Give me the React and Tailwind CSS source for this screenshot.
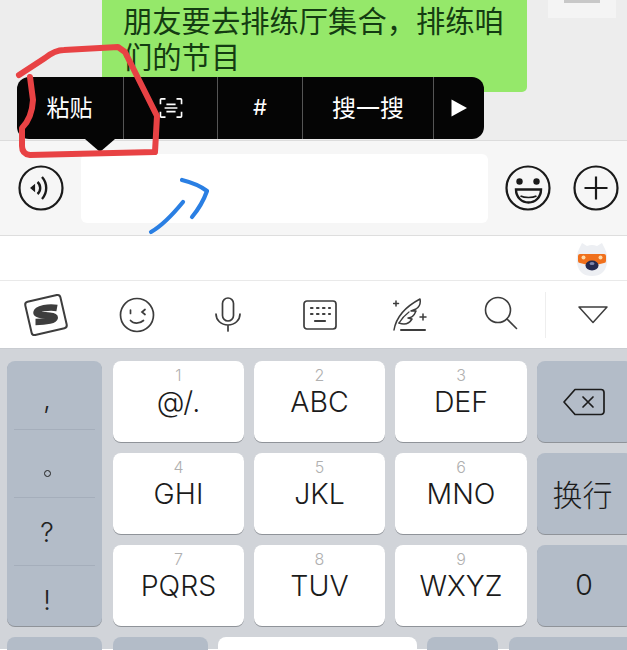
const cjk = { fontFamily: '"Noto Sans CJK SC", sans-serif' };

const keys = [
  ['1', '@/.'], ['2', 'ABC'], ['3', 'DEF'],
  ['4', 'GHI'], ['5', 'JKL'], ['6', 'MNO'],
  ['7', 'PQRS'], ['8', 'TUV'], ['9', 'WXYZ'],
];

function LetterKey({ num, label }) {
  return (
    <div className="flex flex-col items-center bg-white rounded-[8px] shadow-[0_1px_0_#8f9399] h-[81px] pt-[4px]">
      <span className="font-['Inter'] text-[16px] leading-[20px] font-light text-[#b0b0b0]">{num}</span>
      <span className="font-['Inter'] text-[28.500px] leading-[34px] font-light text-[#1b1b1b]">{label}</span>
    </div>
  );
}

function SymbolCell({ children, className = '' }) {
  return <div className={`flex items-center justify-center pr-[15px] text-[#222] ${className}`}>{children}</div>;
}

function ToolIcon({ children, className = '' }) {
  return <div className={`flex items-center justify-center ${className}`}>{children}</div>;
}

function PasteMenu() {
  return (
    <div className="absolute left-[17px] top-[77px] w-[467px] h-[62px] bg-[#050505] rounded-[12px] flex text-white">
      <div className="w-[107px] flex items-center justify-center border-r border-[#555] text-[23px] pb-[3px] pr-[1px]" style={cjk}>粘贴</div>
      <div className="w-[94px] flex items-center justify-center border-r border-[#555]">
        <svg width="24" height="22" viewBox="0 0 26 24" fill="none" stroke="#fff" strokeWidth="1.800">
          <path d="M7 2H2.500A1 1 0 0 0 1.500 3v5M19 2h4.500a1 1 0 0 1 1 1v5M7 22H2.500a1 1 0 0 1-1-1v-5M19 22h4.500a1 1 0 0 0 1-1v-5" />
          <path d="M8 8h10M6 12h14M8 16h10" />
        </svg>
      </div>
      <div className="w-[85px] flex items-center justify-center border-r border-[#555] font-['Inter'] text-[22px] pb-[2px]">#</div>
      <div className="w-[131px] flex items-center justify-center border-r border-[#555] text-[24px] pb-[3px]" style={cjk}>搜一搜</div>
      <div className="flex-1 flex items-center justify-center">
        <svg width="16" height="18" viewBox="0 0 16 18"><path d="M0.500 0.500 16 9 0.500 17.500Z" fill="#fff" /></svg>
      </div>
      <div className="absolute left-[68px] top-[62px] w-0 h-0 border-x-[15px] border-x-transparent border-t-[13px] border-t-[#050505]" />
    </div>
  );
}

export default function App() {
  return (
    <div className="relative w-[627px] h-[650px] overflow-hidden bg-white">
      {/* chat */}
      <div className="relative h-[141px] bg-[#ededed] border-b border-[#dcdcdc]">
        <div className="flex items-start">
          <div className="ml-[102px] w-[425px] h-[92px] bg-[#95e86a] rounded-b-[5px] pl-[21px] pr-[20px] pt-[3px]" style={cjk}>
            <p className="text-[29.300px] leading-[36px] -mt-[2px] text-[#143c12]">朋友要去排练厅集合，排练咱们的节目</p>
          </div>
          <div className="ml-[21px] w-[68px] h-[18px] bg-[#f4f4f4] flex justify-center">
            <div className="w-[36px] h-[3px] bg-[#c8c8c8]" />
          </div>
        </div>
      </div>
      <PasteMenu />

      {/* input bar */}
      <div className="h-[95px] bg-[#f6f6f6] border-b border-[#dedede] flex items-start pt-[13px]">
        <ToolIcon className="w-[81px] h-[68px]">
          <svg width="46" height="46" viewBox="0 0 46 46" fill="none" stroke="#1a1a1a" strokeWidth="2.200">
            <circle cx="23" cy="23" r="21.500" />
            <path d="M19.500 17a8 8 0 0 1 0 12" strokeWidth="2.400" />
            <path d="M24 12a16.500 16.500 0 0 1 0 22" strokeWidth="2.400" />
            <path d="M13 23l3.500-3v6Z" fill="#1a1a1a" strokeWidth="1.200" />
          </svg>
        </ToolIcon>
        <div className="w-[407px] h-[69px] bg-white rounded-[6px]" />
        <ToolIcon className="ml-[17px] w-[46px] h-[68px]">
          <svg width="46" height="46" viewBox="0 0 46 46" fill="none" stroke="#1a1a1a" strokeWidth="2.200">
            <circle cx="23" cy="23" r="21.500" />
            <circle cx="14.500" cy="16.500" r="3.200" fill="#1a1a1a" stroke="none" />
            <circle cx="31.500" cy="16.500" r="3.200" fill="#1a1a1a" stroke="none" />
            <path d="M11 24.500h25c0 8-6 13-12.500 13S11 32.500 11 24.500Z" strokeWidth="2.400" />
            <path d="M15.500 31c4 2 12 2 16 0" strokeWidth="1.600" />
          </svg>
        </ToolIcon>
        <ToolIcon className="ml-[22px] w-[46px] h-[68px]">
          <svg width="46" height="46" viewBox="0 0 46 46" fill="none" stroke="#1a1a1a" strokeWidth="2.200">
            <circle cx="23" cy="23" r="21.500" />
            <path d="M11.500 23h23M23 11.500v23" />
          </svg>
        </ToolIcon>
      </div>

      {/* candidate strip */}
      <div className="h-[45px] bg-white border-b border-[#e9e9e9] flex justify-end items-center pr-[19px]">
        <svg width="32" height="38" viewBox="0 0 32 38">
          <path d="M3 10 6 4 11 7Q16 5 21 7L26 4 29 10Q32 16 31 24 29 37 16 37 3 37 1 24 0 16 3 10Z" fill="#edeff3" />
          <path d="M4 15H28Q30 15 30 17V22Q30 24 28 24Q22 26 16 26 10 26 4 24Q2 24 2 22V17Q2 15 4 15Z" fill="#f0701c" />
          <circle cx="7.500" cy="18.500" r="2" fill="#ffd9a8" />
          <circle cx="24.500" cy="18.500" r="2" fill="#ffd9a8" />
          <ellipse cx="16" cy="26.500" rx="6.500" ry="5" fill="#252a4f" />
          <ellipse cx="16" cy="24.500" rx="2.500" ry="1.500" fill="#7d86ad" />
        </svg>
      </div>

      {/* toolbar */}
      <div className="h-[67px] bg-white flex items-center">
        <ToolIcon className="w-[92px]">
          <svg width="46" height="46" viewBox="0 0 46 46" fill="none">
            <rect x="5" y="6" width="36" height="34" rx="3" transform="rotate(-13 23 23)" stroke="#3d3d3d" strokeWidth="2" />
            <path d="M34 16C26 14.500 14 16.500 13.500 20.500c-.5 4 16 1.500 18 4.500 1.500 3-8 5-19 5" stroke="#3d3d3d" strokeWidth="6.500" />
          </svg>
        </ToolIcon>
        <ToolIcon className="w-[90px]">
          <svg width="36" height="36" viewBox="0 0 36 36" fill="none" stroke="#3d3d3d" strokeWidth="1.700" strokeLinecap="round">
            <circle cx="18" cy="18" r="16.500" />
            <path d="M11.500 13v3.500M26 12.500l-3 2.500 3 2.500M11.500 23.500c3 3.500 9 3.500 13 0" />
          </svg>
        </ToolIcon>
        <ToolIcon className="w-[92px]">
          <svg width="28" height="36" viewBox="0 0 28 36" fill="none" stroke="#3d3d3d" strokeWidth="1.700" strokeLinecap="round">
            <rect x="8.500" y="1" width="11" height="23" rx="5.500" />
            <path d="M2 17c0 6 5 11 12 11s12-5 12-11M14 28v6" />
          </svg>
        </ToolIcon>
        <ToolIcon className="w-[92px]">
          <svg width="34" height="30" viewBox="0 0 34 30" fill="none" stroke="#3d3d3d" strokeWidth="1.700" strokeLinecap="round">
            <rect x="1" y="1" width="32" height="28" rx="3" />
            <path d="M8 8h1.500M14 8h1.500M20 8h1.500M26 8h1M8 14h1.500M14 14h1.500M20 14h1.500M26 14h1M12 21h10" strokeWidth="2.200" />
          </svg>
        </ToolIcon>
        <ToolIcon className="w-[90px]">
          <svg width="36" height="34" viewBox="0 0 36 34" fill="none" stroke="#3d3d3d" strokeWidth="1.500" strokeLinecap="round" strokeLinejoin="round">
            <path d="M1 32C3 20 10 10 27 1c1 5-1 8-4 10l-5 2h5c-2 5-4 7-8 7l4 1c-3 5-8 6-13 4" />
            <path d="M6 25c3-5 6-8 10-11" strokeWidth="1.300" />
            <path d="M8 32h24" strokeWidth="2" />
            <path d="M3 3v5M.500 5.500h5M30 16v6M27 19h6" strokeWidth="1.500" />
          </svg>
        </ToolIcon>
        <ToolIcon className="w-[89px] -mt-[3px]">
          <svg width="34" height="34" viewBox="0 0 34 34" fill="none" stroke="#3d3d3d" strokeWidth="1.600" strokeLinecap="round">
            <circle cx="14" cy="14" r="12.500" />
            <path d="M23 23l9.500 9.500" />
          </svg>
        </ToolIcon>
        <div className="w-px h-[46px] bg-[#eeeeee]" />
        <ToolIcon className="flex-1 pl-[12px]">
          <svg width="30" height="18" viewBox="0 0 30 18" fill="none" stroke="#3d3d3d" strokeWidth="1.500" strokeLinejoin="round">
            <path d="M1 1h28L15 16.500Z" />
          </svg>
        </ToolIcon>
      </div>

      {/* keyboard */}
      <div className="h-[301px] bg-[#d1d4d9] border-t border-[#c9ccd1] pt-[12px] pl-[7px]">
        <div className="grid grid-cols-[96px_131px_131px_132px_96px] grid-rows-[81px_81px_81px] gap-x-[10px] gap-y-[11px]">
          <div className="row-span-3 mr-px bg-[#b3bcc8] rounded-[8px] shadow-[0_1px_0_#8f9399] flex flex-col px-[7px] text-[27px] font-['Inter'] font-light">
            <SymbolCell className="h-[69px] pt-[10px] border-b border-[#a5aebb]">,</SymbolCell>
            <SymbolCell className="h-[68px] pt-[20px] border-b border-[#a5aebb]">
              <span className="w-[7px] h-[7px] rounded-full border border-[#222]" />
            </SymbolCell>
            <SymbolCell className="h-[69px] pt-[4px] border-b border-[#a5aebb]">?</SymbolCell>
            <SymbolCell className="h-[60px] pt-[10px]">!</SymbolCell>
          </div>
          {keys.slice(0, 3).map(([num, label]) => <LetterKey key={num} num={num} label={label} />)}
          <div className="bg-[#b3bcc8] rounded-[8px] shadow-[0_1px_0_#8f9399] flex items-center justify-center pr-[3px]">
            <svg width="42" height="28" viewBox="0 0 42 28" fill="none" stroke="#1c1c1c" strokeWidth="1.700" strokeLinejoin="round" strokeLinecap="round">
              <path d="M12 1.500h26a3 3 0 0 1 3 3v19a3 3 0 0 1-3 3H12L1 14Z" />
              <path d="M20 9l10 10M30 9 20 19" />
            </svg>
          </div>
          {keys.slice(3, 6).map(([num, label]) => <LetterKey key={num} num={num} label={label} />)}
          <div className="bg-[#b3bcc8] rounded-[8px] shadow-[0_1px_0_#8f9399] flex items-center justify-center pr-[5px] text-[30px] font-light text-[#1c1c1c]" style={cjk}>换行</div>
          {keys.slice(6).map(([num, label]) => <LetterKey key={num} num={num} label={label} />)}
          <div className="bg-[#b3bcc8] rounded-[8px] shadow-[0_1px_0_#8f9399] flex items-center justify-center pr-[2px] font-['Inter'] text-[28.500px] font-light text-[#1c1c1c]">0</div>
        </div>
        <div className="flex mt-[11px]">
          <div className="shrink-0 w-[95px] h-[40px] bg-[#b3bcc8] rounded-[8px]" />
          <div className="shrink-0 ml-[11px] w-[95px] h-[40px] bg-[#b3bcc8] rounded-[8px]" />
          <div className="shrink-0 ml-[10px] w-[199px] h-[40px] bg-white rounded-[8px]" />
          <div className="shrink-0 ml-[10px] w-[71px] h-[40px] bg-[#b3bcc8] rounded-[8px]" />
          <div className="shrink-0 ml-[11px] w-[130px] h-[40px] bg-[#b3bcc8] rounded-[8px]" />
        </div>
      </div>

      {/* hand drawn marks on the screenshot */}
      <svg className="absolute inset-0 pointer-events-none" width="627" height="650" viewBox="0 0 627 650" fill="none" strokeLinecap="round" strokeLinejoin="round">
        <path d="M19 75 45 58Q55 50 64 50L118 47 125 52 157 116 155 152 30 155Q22 154 22 146L22 128Q32 118 33 100L30 77" stroke="#e84244" strokeWidth="6" />
        <path d="M151 232Q165 224 183 202M182 180Q198 184 207 191 202 205 192 217" stroke="#2a7fe3" strokeWidth="4.200" />
      </svg>
    </div>
  );
}
